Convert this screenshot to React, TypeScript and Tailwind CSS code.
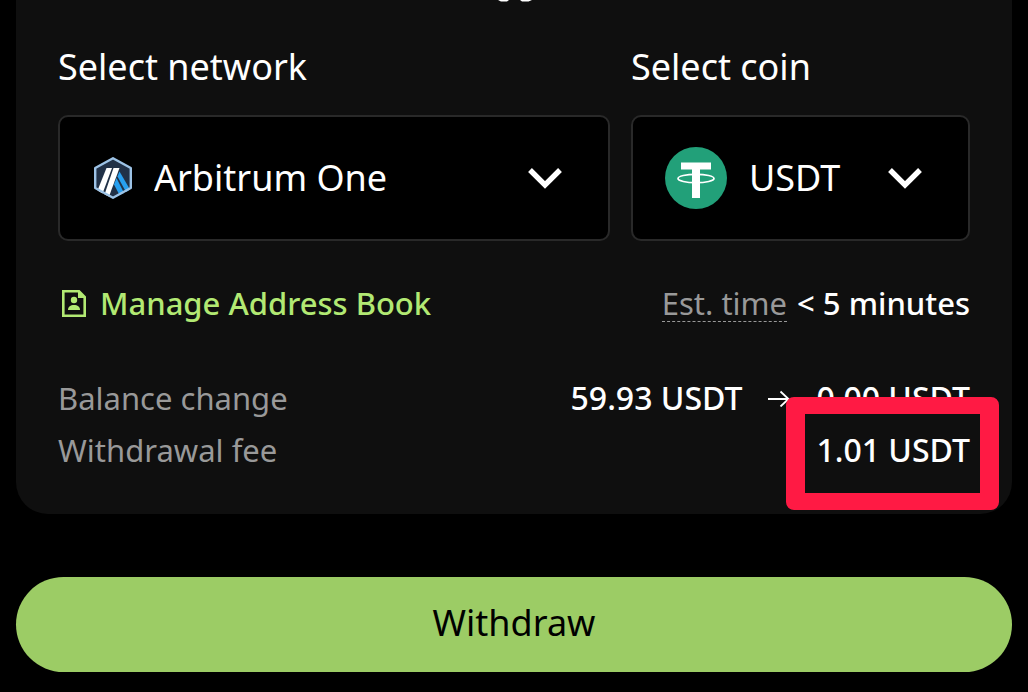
import type { ReactNode } from "react";

function ArbitrumLogo() {
  return (
    <svg viewBox="0 0 38 42" className="h-[42px] w-[38px] shrink-0" aria-hidden="true">
      <path d="M19 1.500 36.500 11v20L19 40.500 1.500 31V11Z" fill="#213147" />
      <path d="M25.500 14.500 36 32.500l-4 2.500-8.500-15.500Z" fill="#28a0f0" />
      <path d="m22.500 21 7.500 15-4.500 2-5.500-10.500Z" fill="#28a0f0" />
      <path d="M12.500 11h5.500L8.500 36.500 3.500 33.500Z" fill="#fff" />
      <path d="M19.500 11H25.500L15 39.500l-4.500-2Z" fill="#fff" />
      <path
        d="M19 1.200 36.800 11v20L19 40.800 1.200 31V11Z"
        fill="none"
        stroke="#9dc3e6"
        strokeWidth="2.400"
        strokeLinejoin="round"
      />
    </svg>
  );
}

function TetherLogo() {
  return (
    <svg viewBox="0 0 62 62" className="size-[62px] shrink-0" aria-hidden="true">
      <circle cx="31" cy="31" r="31" fill="#22a079" />
      <ellipse cx="31" cy="31.500" rx="18" ry="4.200" fill="none" stroke="#fff" strokeWidth="1.700" />
      <path d="M16 15.500h30v7H35v28.500h-8V22.500H16Z" fill="#fff" />
    </svg>
  );
}

function Chevron() {
  return (
    <svg
      viewBox="0 0 34 21"
      className="pointer-events-none h-[21px] w-[34px] shrink-0"
      fill="none"
      stroke="#fff"
      strokeWidth="5.400"
      aria-hidden="true"
    >
      <path d="M2 2 17 17 32 2" />
    </svg>
  );
}

function AddressBookIcon() {
  return (
    <svg viewBox="0 0 24 27" className="h-[27px] w-6 shrink-0" aria-hidden="true">
      <path d="M1.300 1.300H17L22.700 7v18.700H1.300Z" fill="none" stroke="#b2e973" strokeWidth="2.600" />
      <path d="M16 0v8h8Z" fill="#b2e973" />
      <circle cx="12" cy="10" r="3.200" fill="#b2e973" />
      <path d="M6 20c0-3.500 2.500-5 6-5s6 1.500 6 5Z" fill="#b2e973" />
    </svg>
  );
}

function ArrowRight() {
  return (
    <svg
      viewBox="0 0 22 18"
      className="h-[18px] w-[22px] shrink-0"
      fill="none"
      stroke="#fff"
      strokeWidth="1.800"
      aria-hidden="true"
    >
      <path d="M0 10h20M12.500 2.500 20.500 10l-8 7.500" />
    </svg>
  );
}

type PickerProps = {
  id: string;
  label: string;
  options: string[];
  icon: ReactNode;
  boxClass: string;
};

function Picker({ id, label, options, icon, boxClass }: PickerProps) {
  return (
    <div className="flex min-w-0 flex-col gap-6">
      <label htmlFor={id} className="text-[36px] leading-[48px]">
        {label}
      </label>
      <div
        className={`flex h-[126px] items-center rounded-[10px] border-2 border-[#292929] bg-black pr-[46px] ${boxClass}`}
      >
        {icon}
        <select
          id={id}
          className="h-12 min-w-0 flex-1 appearance-none bg-transparent text-[36px] leading-[48px] outline-none"
        >
          {options.map((option) => (
            <option key={option}>{option}</option>
          ))}
        </select>
        <Chevron />
      </div>
    </div>
  );
}

export default function App() {
  return (
    <div className="min-h-screen bg-black px-4 pb-5 font-['Noto_Sans',sans-serif] text-white">
      <main>
        <section className="rounded-b-[32px] bg-[#0f0f0f] px-[42px] pb-[38px]">
          <div className="flex h-[43px] justify-center">
            <svg viewBox="0 0 36 2" className="h-0.5 w-9" fill="#fff" aria-hidden="true">
              <path d="M2 0h11l-2 1.500H5ZM24 0h12l-3.500 1.500H26Z" />
            </svg>
          </div>

          <div className="grid grid-cols-[552fr_339fr] gap-[21px]">
            <Picker
              id="network"
              label="Select network"
              options={["Arbitrum One"]}
              icon={<ArbitrumLogo />}
              boxClass="gap-[22px] pl-[34px]"
            />
            <Picker
              id="coin"
              label="Select coin"
              options={["USDT"]}
              icon={<TetherLogo />}
              boxClass="gap-[22px] pl-8"
            />
          </div>

          <div className="mt-[39px] flex items-center justify-between text-[31px] leading-[46px]">
            <a href="#address-book" className="flex items-center gap-[14px] pl-1 font-medium text-[#b2e973]">
              <AddressBookIcon />
              Manage Address Book
            </a>
            <p className="flex items-center gap-[10px] font-medium">
              <span className="border-b border-dashed border-[#999999] font-normal leading-9 text-[#999999]">
                Est. time
              </span>
              &lt; 5 minutes
            </p>
          </div>

          <dl className="mt-[46px] text-[32px] leading-[52px]">
            <div className="flex justify-between">
              <dt className="text-[31px] text-[#999999]">Balance change</dt>
              <dd className="flex items-center gap-[26px] font-medium">
                <span>59.93 USDT</span>
                <ArrowRight />
                <span>0.00 USDT</span>
              </dd>
            </div>
            <div className="flex justify-between">
              <dt className="text-[31px] text-[#999999]">Withdrawal fee</dt>
              <dd className="relative font-medium">
                1.01 USDT
                <span
                  className="pointer-events-none absolute -right-[29px] -top-[27px] h-[113px] w-[213px] rounded-lg border-x-[19px] border-y-[17px] border-[#ff1a44]"
                  aria-hidden="true"
                />
              </dd>
            </div>
          </dl>
        </section>

        <button
          type="button"
          className="mt-[63px] h-[95px] w-full rounded-full bg-[#9ccc65] pb-1 text-[36px] leading-[48px] text-black"
        >
          Withdraw
        </button>
      </main>
    </div>
  );
}
